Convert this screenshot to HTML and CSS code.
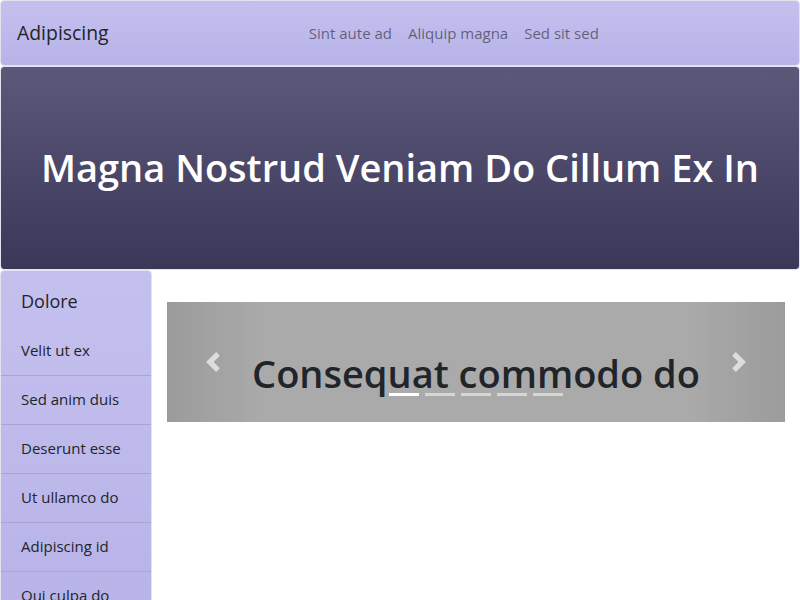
FILE: index.html
```html
<!DOCTYPE html>
<html>
<head>
<meta charset="utf-8">
<link rel="stylesheet" href="styles.css">
</head>
<body>
<nav class="navbar">
  <a class="brand" href="#">Adipiscing</a>
  <ul class="nav-links">
    <li><a href="#">Sint aute ad</a></li>
    <li><a href="#">Aliquip magna</a></li>
    <li><a href="#">Sed sit sed</a></li>
  </ul>
</nav>
<header class="hero">
  <h1>Magna Nostrud Veniam Do Cillum Ex In</h1>
</header>
<div class="main">
  <aside class="sidebar">
    <div class="side-head">Dolore</div>
    <a class="side-item" href="#">Velit ut ex</a>
    <a class="side-item" href="#">Sed anim duis</a>
    <a class="side-item" href="#">Deserunt esse</a>
    <a class="side-item" href="#">Ut ullamco do</a>
    <a class="side-item" href="#">Adipiscing id</a>
    <a class="side-item" href="#">Qui culpa do</a>
  </aside>
  <section class="content">
    <div class="carousel">
      <a class="ctrl ctrl-prev" href="#"><svg width="20" height="20" viewBox="0 0 8 8"><path fill="#fff" d="M5.25 0l-4 4 4 4 1.5-1.5L4.25 4l2.5-2.5L5.25 0z"/></svg></a>
      <h2 class="caption">Consequat commodo do</h2>
      <ol class="indicators">
        <li class="active"></li><li></li><li></li><li></li><li></li>
      </ol>
      <a class="ctrl ctrl-next" href="#"><svg width="20" height="20" viewBox="0 0 8 8"><path fill="#fff" d="M2.75 0l-1.5 1.5L3.75 4l-2.5 2.5L2.75 8l4-4-4-4z"/></svg></a>
    </div>
  </section>
</div>
</body>
</html>
```
FILE: styles.css
```css
* { box-sizing: border-box; }
html, body { margin: 0; padding: 0; }
body {
  font-family: "Open Sans", "Noto Sans", sans-serif;
  color: #212529;
  background: #fff;
  font-size: 15px;
  line-height: 1.5;
}
a { text-decoration: none; }
.navbar {
  display: flex;
  align-items: center;
  height: 66px;
  padding: 0 16px;
  border: 1px solid #e3e3ee;
  border-radius: 4px;
  background: linear-gradient(#c4c0ee, #b8b3e8);
}
.brand {
  font-size: 19.4px;
  color: #212529;
  margin-right: 16px;
}
.nav-links {
  list-style: none;
  margin: 0 auto;
  padding: 0;
  display: flex;
}
.nav-links a {
  display: block;
  padding: 8px;
  font-size: 15px;
  color: rgba(0,0,0,.5);
}
.hero {
  height: 204px;
  display: flex;
  align-items: center;
  justify-content: center;
  border: 1px solid #e3e3ee;
  border-radius: 4px;
  background: linear-gradient(#5b5879, #3b3759);
}
.hero h1 {
  margin: 0;
  color: #fff;
  font-size: 38px;
  font-weight: 600;
  line-height: 1.2;
}
.main {
  display: flex;
  align-items: flex-start;
}
.sidebar {
  width: 152px;
  flex: none;
  display: flex;
  flex-direction: column;
  border: 1px solid #e3e3ee;
  border-radius: 4px;
  background: linear-gradient(#c4c0ee, #b8b3e8);
}
.side-head {
  height: 56px;
  padding: 17px 20px 0;
  font-size: 18px;
}
.side-item {
  height: 49px;
  padding: 12px 20px;
  font-size: 15px;
  color: #212529;
  border-bottom: 1px solid #a9a4d4;
}
.content {
  flex: 1;
  padding: 32px 15px 0 15px;
}
.carousel {
  position: relative;
  height: 120px;
  background: #aaa;
  text-align: center;
}
.caption {
  margin: 0;
  padding-top: 49px;
  font-size: 38px;
  font-weight: 600;
  line-height: 1.2;
  color: #212529;
}
.ctrl {
  position: absolute;
  top: 0;
  bottom: 0;
  width: 15%;
  display: flex;
  align-items: center;
  justify-content: center;
  opacity: .6;
}
.ctrl-prev { left: 0; background: linear-gradient(to right, rgba(0,0,0,.14), rgba(0,0,0,0)); }
.ctrl-next { right: 0; background: linear-gradient(to left, rgba(0,0,0,.14), rgba(0,0,0,0)); }
.indicators {
  position: absolute;
  left: 0;
  right: 0;
  bottom: 26px;
  margin: 0;
  padding: 0;
  list-style: none;
  display: flex;
  justify-content: center;
  gap: 6px;
}
.indicators li {
  width: 30px;
  height: 3px;
  background: #fff;
  opacity: .5;
}
.indicators li.active { opacity: 1; }
```
